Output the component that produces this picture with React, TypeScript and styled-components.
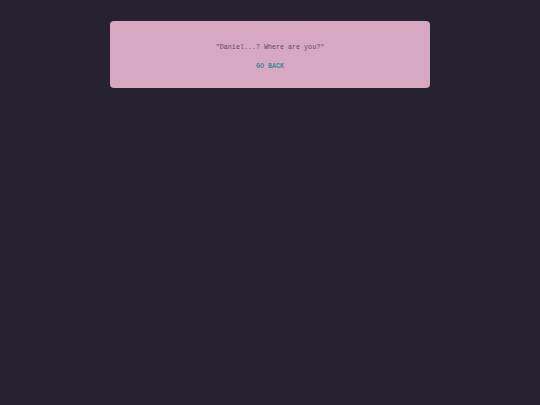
import React from "react";
import styled, { createGlobalStyle } from "styled-components";

const Global = createGlobalStyle`
  html, body { margin: 0; padding: 0; background: #262232; }
  body { min-height: 405px; }
`;

const Page = styled.div`
  display: flex;
  justify-content: center;
  padding-top: 21px;
  min-height: 405px;
  box-sizing: border-box;
  background: #262232;
`;

const Card = styled.div`
  width: 320px;
  height: 67px;
  box-sizing: border-box;
  background: #d7a8c1;
  border-radius: 4px;
  display: flex;
  flex-direction: column;
  align-items: center;
  padding-top: 22px;
  gap: 10px;
  font-family: "Liberation Mono", "Courier New", monospace;
`;

const Message = styled.p`
  margin: 0;
  font-size: 6.7px;
  line-height: 9px;
  color: #5e4f5b;
`;

const Link = styled.a`
  font-size: 6.7px;
  line-height: 9px;
  font-weight: bold;
  color: #3f8a9a;
  text-decoration: none;
  text-transform: uppercase;
`;

export default function App() {
  return (
    <>
      <Global />
      <Page>
        <Card>
          <Message>"Daniel...? Where are you?"</Message>
          <Link href="#">Go back</Link>
        </Card>
      </Page>
    </>
  );
}
